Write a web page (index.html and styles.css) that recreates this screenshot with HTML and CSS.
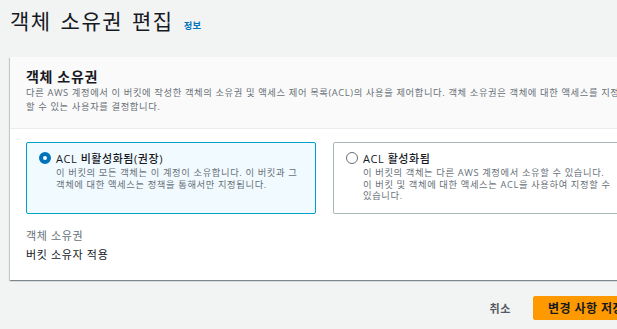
FILE: index.html
```html
<!doctype html>
<html lang="ko">
	<head>
		<meta charset="UTF-8" />
		<meta name="viewport" content="width=device-width, initial-scale=1.0" />
		<title>객체 소유권 편집</title>
		<link rel="stylesheet" href="styles.css">
	</head>
	<body>
		<div class="page">
			<h1 class="page-title">객체 소유권 편집<a class="info" href="#">정보</a></h1>

			<div class="card">
				<div class="card-header">
					<h2>객체 소유권</h2>
					<p class="card-desc">다른 AWS 계정에서 이 버킷에 작성한 객체의 소유권 및 액세스 제어 목록(ACL)의 사용을 제어합니다. 객체 소유권은 객체에 대한 액세스를 지정할 수 있는 사용자를 결정합니다.</p>
				</div>

				<div class="card-body">
					<div class="tiles">
						<label class="tile selected">
							<input class="radio" type="radio" name="ownership" checked>
							<span class="tile-text">
								<span class="tile-title">ACL 비활성화됨(권장)</span>
								<span class="tile-desc">이 버킷의 모든 객체는 이 계정이 소유합니다. 이 버킷과 그 객체에 대한 액세스는 정책을 통해서만 지정됩니다.</span>
							</span>
						</label>
						<label class="tile">
							<input class="radio" type="radio" name="ownership">
							<span class="tile-text">
								<span class="tile-title">ACL 활성화됨</span>
								<span class="tile-desc">이 버킷의 객체는 다른 AWS 계정에서 소유할 수 있습니다. 이 버킷 및 객체에 대한 액세스는 ACL을 사용하여 지정할 수 있습니다.</span>
							</span>
						</label>
					</div>

					<div class="field">
						<div class="field-label">객체 소유권</div>
						<div class="field-value">버킷 소유자 적용</div>
					</div>
				</div>
			</div>

			<div class="actions">
				<button class="btn-link">취소</button>
				<button class="btn-primary">변경 사항 저장</button>
			</div>
		</div>
	</body>
</html>
```

FILE: styles.css
```css
body {
	margin: 0;
	background: #f2f3f3;
	color: #16191f;
	font-family: 'Open Sans', 'Noto Sans CJK KR', sans-serif;
	overflow: hidden;
}
.page {
	width: 629px;
	padding: 6px 10px 0;
}
.page-title {
	margin: 0 0 16px;
	font-size: 21px;
	line-height: 30px;
	font-weight: 400;
	letter-spacing: 1.5px;
	word-spacing: 2px;
}
.info {
	margin-left: 10px;
	font-size: 9.3px;
	font-weight: 700;
	color: #0073bb;
	text-decoration: none;
	letter-spacing: 0.4px;
	word-spacing: 0;
}
.card {
	background: white;
	box-shadow: 0 1px 1px 0 rgba(0,28,36,0.3), 1px 1px 1px 0 rgba(0,28,36,0.15), -1px 1px 1px 0 rgba(0,28,36,0.15);
}
.card-header {
	background: #fafafa;
	border-bottom: 1px solid #eaeded;
	padding: 11px 16px 14px;
}
.card-header h2 {
	margin: 0;
	font-size: 14px;
	line-height: 18px;
	font-weight: 700;
	letter-spacing: 0.65px;
}
.card-desc {
	margin: 0;
	font-size: 9.3px;
	line-height: 14px;
	letter-spacing: 0.62px;
	color: #687078;
}
.card-body {
	padding: 13px 16px 16px;
}
.tiles {
	display: grid;
	grid-template-columns: 1fr 1fr;
	gap: 17px;
	margin-bottom: 13px;
}
.tile {
	display: flex;
	align-items: flex-start;
	border: 1px solid #aab7b8;
	border-radius: 2px;
	padding: 7px 10px 11px 12px;
	cursor: pointer;
}
.tile.selected {
	background: #f1faff;
	border-color: #00a1c9;
}
.radio {
	appearance: none;
	box-sizing: border-box;
	flex: none;
	width: 12px;
	height: 12px;
	margin: 2px 5px 0 0;
	border: 1.5px solid #687078;
	border-radius: 50%;
	background: white;
}
.radio:checked {
	border: 4px solid #0073bb;
}
.tile-text {
	display: flex;
	flex-direction: column;
}
.tile-title {
	font-size: 11px;
	line-height: 17px;
	font-weight: 500;
	letter-spacing: 0.55px;
}
.tile-desc {
	font-size: 9.3px;
	line-height: 11.7px;
	letter-spacing: 0.62px;
	color: #687078;
}
.field {
	font-size: 11px;
	line-height: 18px;
	letter-spacing: 0.65px;
}
.field-label {
	margin-bottom: 1px;
	color: #687078;
}
.actions {
	display: flex;
	justify-content: flex-end;
	align-items: center;
	margin-top: 16px;
}
.btn-link {
	border: none;
	background: none;
	padding: 4px 16px;
	margin-right: 6px;
	font: inherit;
	font-size: 11px;
	font-weight: 700;
	letter-spacing: 0.6px;
	color: #545b64;
	cursor: pointer;
}
.btn-primary {
	border: 1px solid #ff9900;
	border-radius: 2px;
	background: #ff9900;
	padding: 0 14px;
	height: 24px;
	font: inherit;
	font-size: 12px;
	font-weight: 700;
	letter-spacing: 0.45px;
	color: #16191f;
	cursor: pointer;
}
```
